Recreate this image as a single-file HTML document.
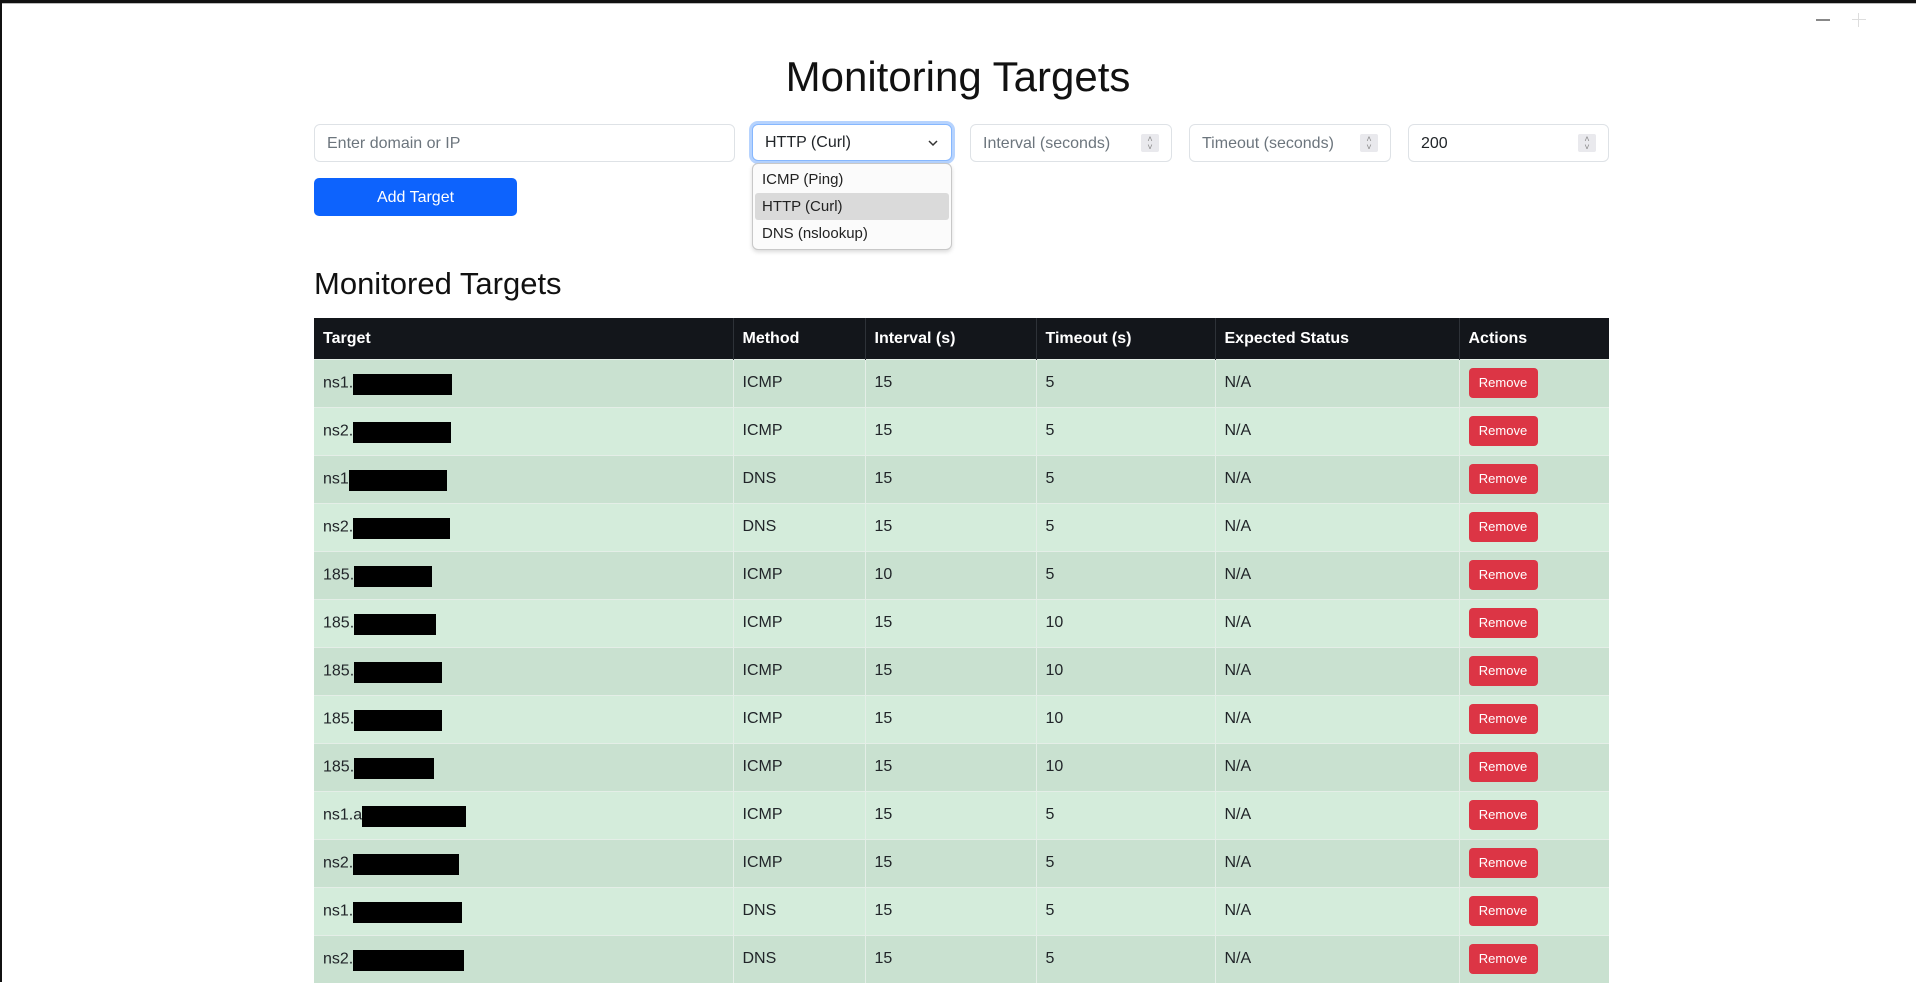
<!DOCTYPE html>
<html><head><meta charset="utf-8"><style>
*{box-sizing:border-box;margin:0;padding:0}
body{width:1916px;height:982px;overflow:hidden;background:#fff;font-family:"Liberation Sans",sans-serif;color:#212529;position:relative}
.a{position:absolute}
.inp{position:absolute;top:124px;height:38px;border:1px solid #dee2e6;border-radius:6px;background:#fff;font-size:16px;line-height:37px;padding-left:12px;color:#6c757d}
.spin{position:absolute;right:12px;top:9px;width:18px;height:18px;background:#e9e9ed;border-radius:2px;font-size:9px;line-height:8px;text-align:center;color:#888;padding-top:1px}
table{position:absolute;left:314px;top:318px;width:1295px;border-collapse:collapse;font-size:16px}
th{background:#13161b;color:#fff;text-align:left;height:41px;padding:2px 9px 0;font-weight:bold;border-left:1px solid #2e3238}
td{height:48px;padding:0 9px;border-left:1px solid #e4eee7;border-top:1px solid #e4eee7;background:#d4ecdb;position:relative}
tr:nth-child(even) td{background:#c9e1d0}
th:first-child,td:first-child{border-left:none}
.r{display:inline-block;background:#000;height:21px;vertical-align:middle;position:relative;top:1px}
.btn{display:inline-block;width:69px;height:30px;background:#dc3545;color:#fff;border-radius:4px;font-size:13px;line-height:30px;text-align:center}
</style></head><body>
<div class="a" style="left:0;top:0;width:1916px;height:3px;background:#111"></div>
<div class="a" style="left:0;top:3px;width:1916px;height:1px;background:#bbb"></div>
<div class="a" style="left:0;top:0;width:2px;height:982px;background:#111"></div>
<div class="a" style="left:1816px;top:19px;width:14px;height:2px;background:#888"></div>
<div class="a" style="left:1852px;top:19px;width:14px;height:1px;background:#ddd"></div>
<div class="a" style="left:1858px;top:13px;width:1px;height:14px;background:#ddd"></div>

<div class="a" style="left:0;width:1916px;top:49px;text-align:center;font-size:42px;line-height:56px;color:#111">Monitoring Targets</div>

<div class="inp" style="left:314px;width:421px">Enter domain or IP</div>
<div class="inp" style="left:752px;width:200px;height:37px;border-color:#86b7fe;box-shadow:0 0 0 3px rgba(13,110,253,.3);color:#212529;line-height:36px">HTTP (Curl)
<svg class="a" style="right:12px;top:13px" width="12" height="10" viewBox="0 0 12 10"><path d="M2 3l4 4 4-4" fill="none" stroke="#333" stroke-width="1.5"/></svg></div>
<div class="inp" style="left:970px;width:202px">Interval (seconds)<div class="spin">˄<br>˅</div></div>
<div class="inp" style="left:1189px;width:202px">Timeout (seconds)<div class="spin">˄<br>˅</div></div>
<div class="inp" style="left:1408px;width:201px;color:#212529">200<div class="spin">˄<br>˅</div></div>

<div class="a" style="left:314px;top:178px;width:203px;height:38px;background:#0d63fd;border-radius:5px;color:#fff;font-size:16px;line-height:39px;text-align:center">Add Target</div>

<div class="a" style="left:752px;top:163px;width:200px;height:87px;background:#fbfbfb;border:1px solid #c8c8c8;border-radius:6px;box-shadow:0 2px 4px rgba(0,0,0,.15);font-size:15px;color:#222">
<div class="a" style="left:2px;top:29px;width:194px;height:27px;background:#dadada;border-radius:3px"></div>
<div class="a" style="left:9px;top:2px;line-height:27px">ICMP (Ping)</div>
<div class="a" style="left:9px;top:29px;line-height:27px">HTTP (Curl)</div>
<div class="a" style="left:9px;top:56px;line-height:27px">DNS (nslookup)</div>
</div>

<div class="a" style="left:314px;top:264px;font-size:31px;line-height:40px;color:#111">Monitored Targets</div>

<table>
<colgroup><col style="width:419px"><col style="width:132px"><col style="width:171px"><col style="width:179px"><col style="width:244px"><col style="width:150px"></colgroup>
<tr><th>Target</th><th>Method</th><th>Interval (s)</th><th>Timeout (s)</th><th>Expected Status</th><th>Actions</th></tr>
<tr><td>ns1.<span class="r" style="width:99px"></span></td><td>ICMP</td><td>15</td><td>5</td><td>N/A</td><td><span class="btn">Remove</span></td></tr>
<tr><td>ns2.<span class="r" style="width:98px"></span></td><td>ICMP</td><td>15</td><td>5</td><td>N/A</td><td><span class="btn">Remove</span></td></tr>
<tr><td>ns1<span class="r" style="width:98px"></span></td><td>DNS</td><td>15</td><td>5</td><td>N/A</td><td><span class="btn">Remove</span></td></tr>
<tr><td>ns2.<span class="r" style="width:97px"></span></td><td>DNS</td><td>15</td><td>5</td><td>N/A</td><td><span class="btn">Remove</span></td></tr>
<tr><td>185.<span class="r" style="width:78px"></span></td><td>ICMP</td><td>10</td><td>5</td><td>N/A</td><td><span class="btn">Remove</span></td></tr>
<tr><td>185.<span class="r" style="width:82px"></span></td><td>ICMP</td><td>15</td><td>10</td><td>N/A</td><td><span class="btn">Remove</span></td></tr>
<tr><td>185.<span class="r" style="width:88px"></span></td><td>ICMP</td><td>15</td><td>10</td><td>N/A</td><td><span class="btn">Remove</span></td></tr>
<tr><td>185.<span class="r" style="width:88px"></span></td><td>ICMP</td><td>15</td><td>10</td><td>N/A</td><td><span class="btn">Remove</span></td></tr>
<tr><td>185.<span class="r" style="width:80px"></span></td><td>ICMP</td><td>15</td><td>10</td><td>N/A</td><td><span class="btn">Remove</span></td></tr>
<tr><td>ns1.a<span class="r" style="width:104px"></span></td><td>ICMP</td><td>15</td><td>5</td><td>N/A</td><td><span class="btn">Remove</span></td></tr>
<tr><td>ns2.<span class="r" style="width:106px"></span></td><td>ICMP</td><td>15</td><td>5</td><td>N/A</td><td><span class="btn">Remove</span></td></tr>
<tr><td>ns1.<span class="r" style="width:109px"></span></td><td>DNS</td><td>15</td><td>5</td><td>N/A</td><td><span class="btn">Remove</span></td></tr>
<tr><td>ns2.<span class="r" style="width:111px"></span></td><td>DNS</td><td>15</td><td>5</td><td>N/A</td><td><span class="btn">Remove</span></td></tr>
</table>
</body></html>
